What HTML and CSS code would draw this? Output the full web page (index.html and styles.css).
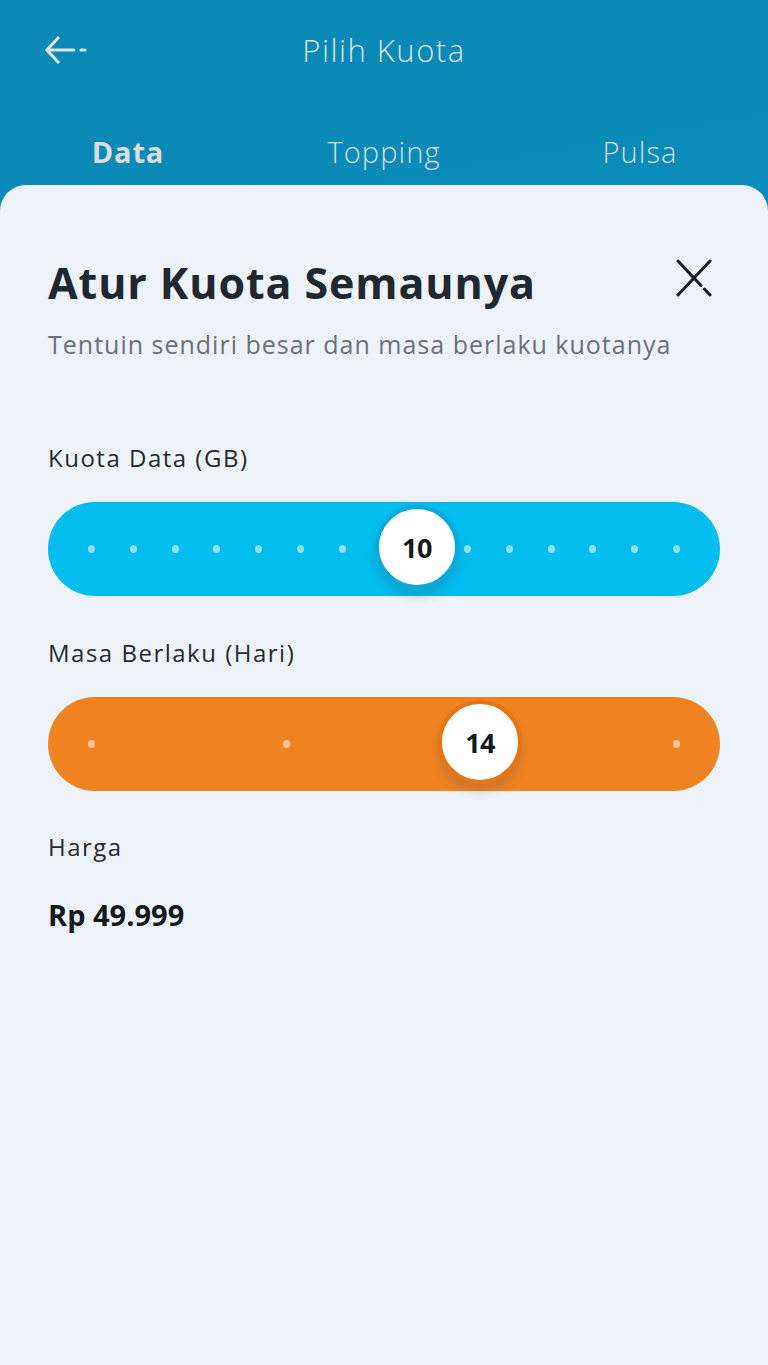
FILE: index.html
```html
<!DOCTYPE html>
<html lang="id">
<head>
<meta charset="utf-8">
<title>Pilih Kuota</title>
<link rel="stylesheet" href="styles.css">
</head>
<body>
<div class="app">
  <header class="header">
    <div class="topbar">
      <button class="back" aria-label="Kembali">
        <svg width="44" height="32" viewBox="0 0 44 32" fill="none" stroke="#dfe6ea" stroke-width="3.2" stroke-linecap="round" stroke-linejoin="round">
          <path d="M13 4 L2 16 L13 28"/>
          <path d="M2 16 H29"/>
          <path d="M36 16 H40"/>
        </svg>
      </button>
      <h1 class="page-title">Pilih Kuota</h1>
    </div>
    <nav class="tabs">
      <span class="tab tab-active">Data</span>
      <span class="tab">Topping</span>
      <span class="tab">Pulsa</span>
    </nav>
  </header>
  <main class="sheet">
    <div class="sheet-head">
      <h2 class="sheet-title">Atur Kuota Semaunya</h2>
      <button class="close" aria-label="Tutup">
        <svg width="36" height="38" viewBox="0 0 36 38" fill="none" stroke="#1b1f24" stroke-width="3" stroke-linecap="round">
          <path d="M2 2 L25 26.5"/>
          <path d="M28.5 30 L34 36"/>
          <path d="M34 2 L2 36"/>
        </svg>
      </button>
    </div>
    <p class="sheet-sub">Tentuin sendiri besar dan masa berlaku kuotanya</p>

    <div class="field-label label-first">Kuota Data (GB)</div>
    <div class="track track-blue">
      <div class="dots">
        <i></i><i></i><i></i><i></i><i></i><i></i><i></i><i></i><i></i><i></i><i></i><i></i><i></i><i></i><i></i>
      </div>
      <div class="thumb" style="left: 54.9%;">10</div>
    </div>

    <div class="field-label">Masa Berlaku (Hari)</div>
    <div class="track track-orange">
      <div class="dots">
        <i></i><i></i><i></i><i></i>
      </div>
      <div class="thumb" style="left: 64.3%;">14</div>
    </div>

    <div class="field-label price-label">Harga</div>
    <div class="price">Rp 49.999</div>
  </main>
</div>
</body>
</html>
```

FILE: styles.css
```css
* { box-sizing: border-box; }
html, body { margin: 0; padding: 0; }
body {
  font-family: "Open Sans", "Noto Sans", sans-serif;
  background: #0a8cb9;
}
.app {
  min-height: 1365px;
  display: flex;
  flex-direction: column;
  background: linear-gradient(170deg, #0a88b6 0%, #0b90bd 60%, #0d97c4 100%);
}
.header {
  height: 185px;
  display: flex;
  flex-direction: column;
}
.topbar {
  height: 100px;
  position: relative;
  display: flex;
  align-items: center;
  justify-content: center;
}
.back {
  position: absolute;
  left: 45px;
  top: 34px;
  border: 0;
  background: none;
  padding: 0;
  line-height: 0;
}
.page-title {
  margin: 0;
  font-weight: 300;
  font-size: 31px;
  letter-spacing: 1.5px;
  color: #d9e4ea;
}
.tabs {
  display: grid;
  grid-template-columns: repeat(3, 1fr);
  padding-top: 32px;
}
.tab {
  text-align: center;
  font-size: 29px;
  line-height: 40px;
  letter-spacing: 1.1px;
  color: #d5dfe4;
  font-weight: 300;
}
.tab-active {
  font-weight: 700;
  color: #dcdcdc;
  letter-spacing: 0.8px;
}
.sheet {
  flex: 1;
  background: #eef2f9;
  border-radius: 26px 26px 0 0;
  padding: 74px 48px 0 48px;
}
.sheet-head {
  display: flex;
  align-items: center;
  justify-content: space-between;
}
.sheet-title {
  margin: 0;
  font-size: 43px;
  line-height: 48px;
  letter-spacing: 0.9px;
  font-weight: 700;
  color: #1f2731;
}
.close {
  border: 0;
  background: none;
  padding: 0;
  line-height: 0;
  margin-right: 8px;
  margin-top: -10px;
}
.sheet-sub {
  margin: 21px 0 0;
  font-size: 25px;
  line-height: 32px;
  letter-spacing: 1px;
  color: #6c7079;
}
.field-label {
  margin-top: 42px;
  font-size: 24px;
  line-height: 30px;
  letter-spacing: 1.5px;
  color: #26292e;
}
.label-first { margin-top: 83px; }
.track {
  margin-top: 29px;
  height: 94px;
  border-radius: 47px;
  position: relative;
  display: flex;
  align-items: center;
  padding: 0 40px;
}
.track-blue { background: #03bdee; }
.track-orange { background: #f18222; }
.dots {
  flex: 1;
  display: flex;
  justify-content: space-between;
  align-items: center;
}
.dots i {
  width: 7px;
  height: 8px;
  border-radius: 50%;
  background: rgba(255, 255, 255, 0.55);
}
.thumb {
  position: absolute;
  top: 50%;
  width: 84px;
  height: 84px;
  margin-top: -44px;
  transform: translateX(-50%);
  border-radius: 50%;
  background: #fff;
  display: flex;
  align-items: center;
  justify-content: center;
  font-size: 27px;
  font-weight: 700;
  color: #15181c;
  letter-spacing: -0.5px;
  box-shadow: 0 8px 10px rgba(60, 60, 80, 0.18);
}
.track-blue .thumb { border: 4px solid #0ba8dc; }
.track-orange .thumb { border: 4px solid #e57617; }
.price-label { margin-top: 41px; }
.price {
  margin-top: 35px;
  font-size: 29px;
  line-height: 36px;
  font-weight: 700;
  color: #15181c;
  letter-spacing: 0;
}
```
